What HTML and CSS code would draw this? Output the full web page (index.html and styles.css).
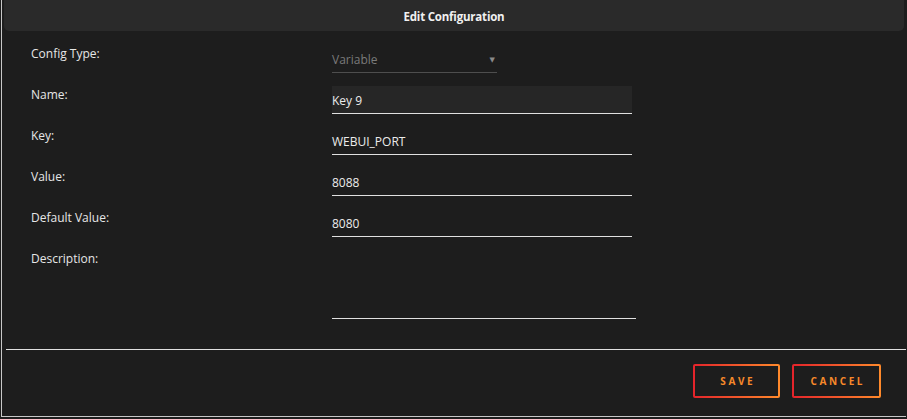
FILE: index.html
```html
<!DOCTYPE html>
<html>
<head>
<meta charset="utf-8">
<link rel="stylesheet" href="styles.css">
</head>
<body>
<div class="dialog">
  <div class="header">Edit Configuration</div>
  <div class="form">
    <div class="row">
      <div class="label">Config Type:</div>
      <div class="select"><span>Variable</span><span class="arrow">▼</span></div>
    </div>
    <div class="row">
      <div class="label">Name:</div>
      <div class="input focused">Key 9</div>
    </div>
    <div class="row">
      <div class="label">Key:</div>
      <div class="input">WEBUI_PORT</div>
    </div>
    <div class="row">
      <div class="label">Value:</div>
      <div class="input">8088</div>
    </div>
    <div class="row">
      <div class="label">Default Value:</div>
      <div class="input">8080</div>
    </div>
    <div class="row">
      <div class="label">Description:</div>
      <div class="textarea"></div>
    </div>
  </div>
  <div class="separator"></div>
  <div class="actions">
    <button class="btn">SAVE</button>
    <button class="btn">CANCEL</button>
  </div>
</div>
</body>
</html>
```
FILE: styles.css
```css
html, body {
  margin: 0;
  padding: 0;
  background: #1d1d1d;
  font-family: "Open Sans", "DejaVu Sans", sans-serif;
}
.dialog {
  width: 905px;
  height: 417px;
  border-left: 1px solid #c8c8c8;
  border-bottom: 1px solid #c8c8c8;
  margin-left: 1px;
  background: #1d1d1d;
  box-sizing: border-box;
  display: flex;
  flex-direction: column;
}
.header {
  margin: 0 2px 0 2px;
  height: 31px;
  background: #2a2a2a;
  border-radius: 0 0 5px 5px;
  color: #f0f0f0;
  font-weight: 700;
  font-size: 11.5px;
  letter-spacing: -0.2px;
  display: flex;
  align-items: center;
  justify-content: center;
  padding-top: 1px;
  box-sizing: border-box;
}
.form {
  padding-top: 15px;
  display: flex;
  flex-direction: column;
}
.row {
  height: 41px;
  display: flex;
  align-items: flex-start;
}
.label {
  width: 330px;
  padding-left: 29px;
  box-sizing: border-box;
  color: #e6e6e6;
  font-size: 12px;
  line-height: 16px;
}
.input {
  margin-top: -1px;
  width: 300px;
  height: 28px;
  box-sizing: border-box;
  border-bottom: 1px solid #e0e0e0;
  color: #ececec;
  font-size: 12px;
  display: flex;
  align-items: center;
  padding-top: 1px;
}
.input.focused {
  background: #262626;
}
.select {
  margin-top: -1px;
  width: 165px;
  height: 28px;
  box-sizing: border-box;
  border-bottom: 1px solid #4e4e4e;
  color: #7a7a7a;
  font-size: 12px;
  display: flex;
  align-items: center;
  justify-content: space-between;
  padding-top: 1px;
}
.arrow {
  font-size: 7px;
  color: #8a8a8a;
  margin-right: 2px;
}
.textarea {
  width: 304px;
  height: 68px;
  box-sizing: border-box;
  border-bottom: 1px solid #e0e0e0;
}
.separator {
  margin: 57px 0 0 4px;
  height: 1px;
  width: 900px;
  background: #e0e0e0;
}
.actions {
  display: flex;
  justify-content: flex-end;
  gap: 12px;
  padding: 14px 25px 0 0;
}
.btn {
  height: 34px;
  padding: 0;
  border: 2px solid transparent;
  border-radius: 2px;
  background: linear-gradient(#1d1d1d, #1d1d1d) padding-box,
              linear-gradient(90deg, #e4232b, #ff8a2b) border-box;
  color: #f7892a;
  font-family: "Open Sans", "DejaVu Sans", sans-serif;
  font-weight: 700;
  font-size: 10px;
  letter-spacing: 2.6px;
  text-indent: 2.6px;
}
.btn:first-child { width: 87px; }
.btn:last-child { width: 89px; }
```
